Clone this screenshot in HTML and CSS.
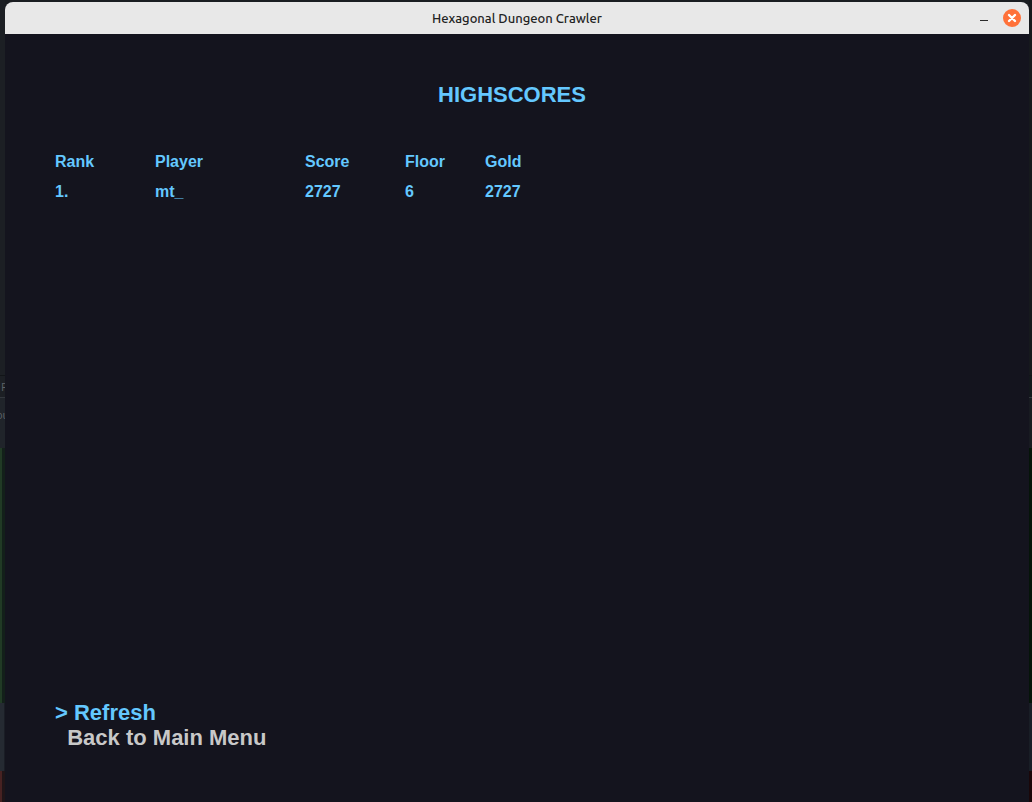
FILE: index.html
```html
<!DOCTYPE html>
<html lang="en">
<head>
<meta charset="utf-8">
<title>Hexagonal Dungeon Crawler</title>
<link rel="stylesheet" href="styles.css">
</head>
<body>
<div class="desktop">
  <div class="edge edge-left" aria-hidden="true">
    <div class="seg seg-top"></div>
    <div class="seg seg-tab"><span>F</span></div>
    <div class="seg seg-label"><span>ou</span></div>
    <div class="seg seg-green"></div>
    <div class="seg seg-slate"></div>
    <div class="seg seg-red"></div>
  </div>
  <div class="window">
    <header class="titlebar">
      <h1 class="window-title">Hexagonal Dungeon Crawler</h1>
      <div class="controls">
        <button class="control" type="button" aria-label="Minimize">
          <svg width="8" height="18" viewBox="0 0 8 18"><path d="M0 11.5h8" stroke="#2b2b2b" stroke-width="1"/></svg>
        </button>
        <button class="control" type="button" aria-label="Close">
          <svg width="18" height="18" viewBox="0 0 18 18"><circle cx="9" cy="9" r="9" fill="#ff7139"/><path d="M6 6l6 6M12 6l-6 6" stroke="#fff" stroke-width="2.4" stroke-linecap="round"/></svg>
        </button>
      </div>
    </header>
    <main class="game">
      <h2 class="heading">HIGHSCORES</h2>
      <table class="scores">
        <colgroup><col class="c-rank"><col class="c-player"><col class="c-score"><col class="c-floor"><col></colgroup>
        <thead><tr><th>Rank</th><th>Player</th><th>Score</th><th>Floor</th><th>Gold</th></tr></thead>
        <tbody><tr><td>1.</td><td>mt_</td><td>2727</td><td>6</td><td>2727</td></tr></tbody>
      </table>
      <nav class="menu">
        <button class="item selected" type="button">&gt; Refresh</button>
        <button class="item" type="button">&nbsp; Back to Main Menu</button>
      </nav>
    </main>
  </div>
  <div class="edge edge-right" aria-hidden="true">
    <div class="seg seg-top"></div>
    <div class="seg seg-tab"></div>
    <div class="seg seg-label"></div>
    <div class="seg seg-green"></div>
    <div class="seg seg-slate"></div>
    <div class="seg seg-red"></div>
  </div>
</div>
</body>
</html>
```
FILE: styles.css
```css
* { box-sizing: border-box; }
body { margin: 0; background: #1a1d21; }

.desktop {
  display: grid;
  grid-template-columns: 5px 1fr 3px;
  min-height: 100vh;
  overflow: hidden;
}

.edge { display: flex; flex-direction: column; overflow: hidden; }
.seg {
  flex: none;
  overflow: hidden;
  color: #5c6167;
  font: 11px/22px "Open Sans", sans-serif;
  background: #1c1f24;
}
.seg-top { height: 375px; }
.seg-tab { height: 23px; border-top: 1px solid #121518; border-bottom: 1px solid #33373d; }
.seg-tab span { margin-left: 1px; }
.seg-label { height: 50px; padding-top: 6px; background: #20242a; }
.seg-label span { margin-left: -4px; }
.seg-green { height: 255px; background: linear-gradient(to right, #213a25 2px, #13201a 2px); }
.seg-slate { height: 68px; background: linear-gradient(to right, #252a32 4px, #1a1d25 4px); }
.seg-red { flex: 1; background: linear-gradient(to right, #472222 2px, #1f1518 2px); }

.edge-right .seg-top { background: #16191d; }
.edge-right .seg-tab { background: #13181c; }
.edge-right .seg-label { background: #181b21; }
.edge-right .seg-green { background: #051409; }
.edge-right .seg-slate { background: #191e26; }
.edge-right .seg-red { background: #1a0709; }

.window {
  display: flex;
  flex-direction: column;
  margin-top: 2px;
  border-radius: 8px 8px 0 0;
  overflow: hidden;
  background: #14141e;
}

.titlebar {
  display: grid;
  grid-template-columns: 1fr auto 1fr;
  align-items: center;
  height: 32px;
  padding: 0 8px;
  background: #e8e8e8;
}
.window-title {
  grid-column: 2;
  margin: 0;
  color: #222;
  font: 500 13px/18px Ubuntu, "Noto Sans", sans-serif;
}
.controls { display: flex; justify-content: flex-end; gap: 15px; }
.control { display: flex; padding: 0; border: 0; background: none; }

.game {
  flex: 1;
  display: flex;
  flex-direction: column;
  padding: 47px 50px 48px;
  color: #64c8ff;
  font-family: "Liberation Sans", Arial, sans-serif;
  font-weight: 700;
}
.heading {
  margin: 0 10px 38px 0;
  font-size: 22px;
  line-height: 28px;
  text-align: center;
}
.scores {
  width: 100%;
  table-layout: fixed;
  border-collapse: collapse;
  font-size: 16px;
  line-height: 30px;
}
.scores th, .scores td { padding: 0; text-align: left; }
.c-rank, .c-score { width: 100px; }
.c-player { width: 150px; }
.c-floor { width: 80px; }

.menu { display: flex; flex-direction: column; align-items: flex-start; margin-top: auto; padding-bottom: 4px; }
.item {
  padding: 0;
  border: 0;
  background: none;
  color: #c8c8c8;
  font: inherit;
  font-size: 22px;
  line-height: 25px;
}
.selected { color: #64c8ff; }
```
